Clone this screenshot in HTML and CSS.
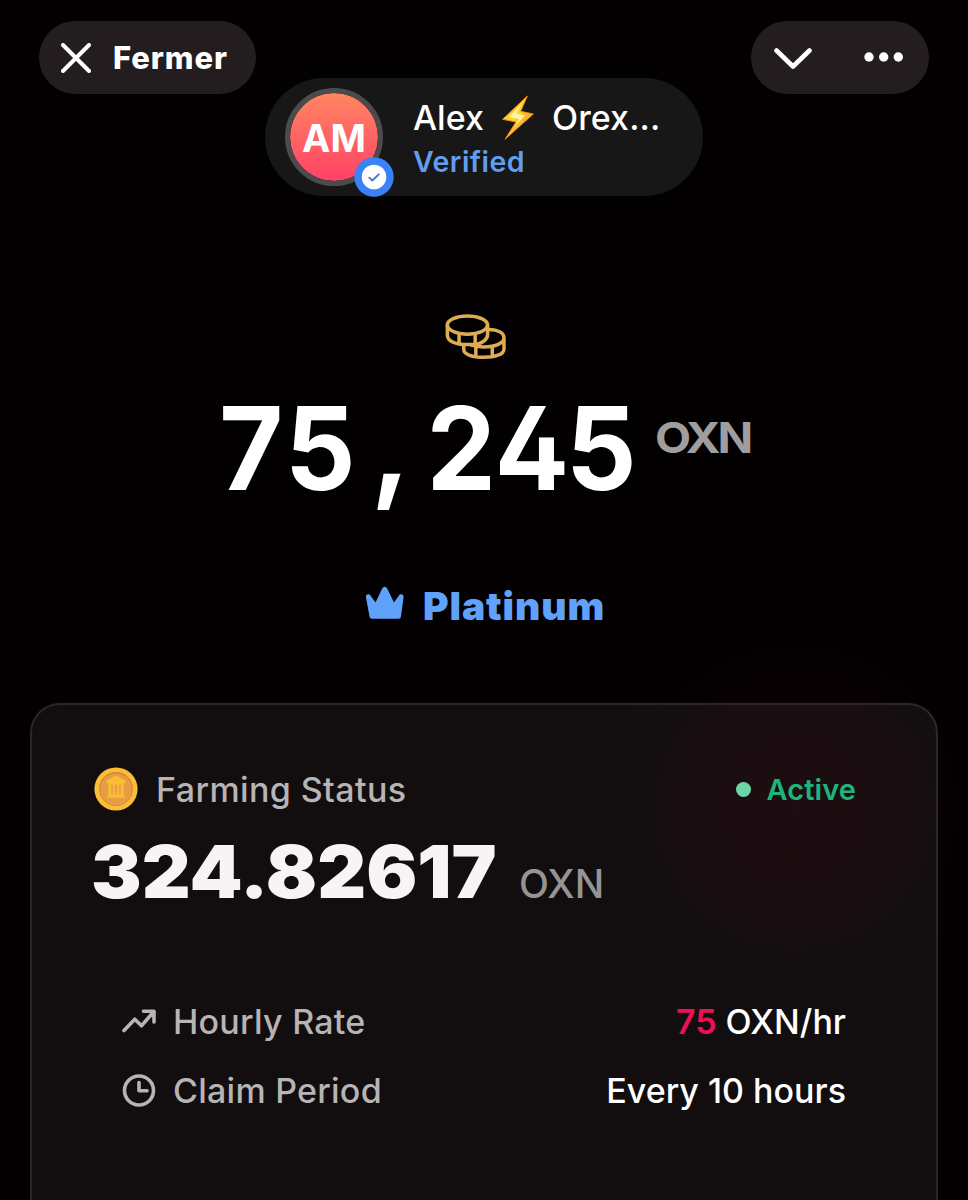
FILE: index.html
```html
<!DOCTYPE html>
<html lang="fr">
<head>
<meta charset="utf-8">
<title>OXN</title>
<link rel="stylesheet" href="styles.css">
</head>
<body>
<div class="app">
  <header class="topbar">
    <button class="pill close">
      <svg class="close-icon" viewBox="0 0 30 30"><path d="M2 2 28 28M28 2 2 28"/></svg>
      <span class="close-text">Fermer</span>
    </button>
    <div class="pill actions">
      <svg class="chevron" viewBox="0 0 38 22"><path d="M2.500 2.500 19 18.500 35.500 2.500"/></svg>
      <svg class="dots" viewBox="0 0 40 10"><circle cx="5" cy="5" r="4.700"/><circle cx="19.700" cy="5" r="4.700"/><circle cx="34.300" cy="5" r="4.700"/></svg>
    </div>
  </header>

  <section class="profile">
    <div class="avatar">
      <span class="initials">AM</span>
      <svg class="badge" viewBox="0 0 40 40"><circle cx="20" cy="20" r="19.700" fill="#3b82f6"/><circle cx="20" cy="20" r="12.300" fill="#fff"/><path d="M15.300 20.600 18.300 23.500 24.800 17.300" fill="none" stroke="#3b76e0" stroke-width="1.800" stroke-linecap="round" stroke-linejoin="round"/></svg>
    </div>
    <div class="who">
      <div class="name">
        <span class="first">Alex</span>
        <svg class="bolt" viewBox="0 0 36 46">
          <defs><linearGradient id="bolt" x1="0" y1="0" x2="1" y2="1"><stop offset="0" stop-color="#ffc21a"/><stop offset=".45" stop-color="#ffd23a"/><stop offset="1" stop-color="#f08200"/></linearGradient></defs>
          <path d="M27.300 1 2.700 24.300 16 27 5 44.300 33.300 19 20.700 16.300Z" fill="url(#bolt)" stroke="#f0900c" stroke-width="1" stroke-linejoin="round"/>
          <path d="M22 8.500 9 22 19 24 15 31 25 20.700 16.500 18.500Z" fill="#fff3a0"/>
        </svg>
        <span class="last">Orex...</span>
      </div>
      <div class="verified">Verified</div>
    </div>
  </section>

  <section class="balance">
    <svg class="coins" viewBox="42 38 188 140">
      <g fill="none" stroke="#deac53" stroke-width="10.500">
        <ellipse cx="112" cy="74" rx="60" ry="27"/>
        <path d="M52 74V103C52 120 70 129 98 132M172 74V103C172 116 158 129 132 133M87 100V131M135 100V131M92 132H136"/>
        <path d="M175 87C205 88 221 98 221 112C221 128 196 139 161 139C146 139 133 137 121 133M101 128V147C101 162 128 170 161 170C194 170 221 162 221 145V112M137 138V168M186 138V166"/>
      </g>
    </svg>
    <div class="amount">
      <span class="digits"><span>7</span><span>5</span><span class="comma">,</span><span>2</span><span>4</span><span>5</span></span>
      <span class="unit">OXN</span>
    </div>
    <div class="tier">
      <svg class="crown" viewBox="0 0 40 34"><path d="M4.500 30.500 1 11.500Q.500 8.500 3.200 8.300 4.800 8.200 5.600 9.700L10.500 16.500 17 3Q18 .700 19.700.700 21.400.700 22.400 3L29 16.500 33.800 9.700Q34.800 8.200 36.300 8.300 39 8.600 38.500 11.500L36 30.500Q35.700 32.700 33.600 32.700H6.800Q4.800 32.700 4.500 30.500Z"/></svg>
      <span class="tier-text">Platinum</span>
    </div>
  </section>

  <section class="card">
    <div class="status">
      <svg class="bank" viewBox="0 0 44 44"><circle cx="22" cy="22" r="21.600" fill="#fabd36"/><circle cx="22" cy="22" r="17" fill="#d98536"/><circle cx="22" cy="22.500" r="16" fill="#e89c43"/><path fill="#fabd36" d="M22 8.500 31 13.500V16H13V13.500ZM14 15H30V17.500H14ZM14.500 17H17.200V28H14.500ZM18.900 17H20.900V28H18.900ZM23.100 17H25.100V28H23.100ZM26.800 17H29.500V28H26.800ZM13.500 27.500H30.500V29L31.500 30.700H12.500L13.500 29Z"/></svg>
      <span class="label status-text">Farming Status</span>
      <span class="live"></span>
      <span class="active">Active</span>
    </div>
    <div class="earned"><span class="earned-value">324.82617</span><span class="earned-unit">OXN</span></div>
    <div class="row">
      <svg class="row-icon" viewBox="0 0 34 34"><path d="M2 26.500 12.800 15.200 19.500 21.800 31.500 8M21.500 7.300H32V18"/></svg>
      <span class="label rate">Hourly Rate</span>
      <span class="value rate-value"><b>75</b> OXN/hr</span>
    </div>
    <div class="row">
      <svg class="row-icon" viewBox="0 0 34 34"><circle cx="17" cy="17.500" r="14.500"/><path d="M17 9.500V17.700H25"/></svg>
      <span class="label period">Claim Period</span>
      <span class="value period-value">Every 10 hours</span>
    </div>
  </section>
</div>
</body>
</html>
```
FILE: styles.css
```css
* { box-sizing: border-box; }
body { margin: 0; background: #030001; font-family: Inter, "Liberation Sans", sans-serif; color: #fff; }
svg { display: block; flex: none; }
.app { width: 968px; height: 1200px; overflow: hidden; position: relative; }
.topbar { display: flex; justify-content: space-between; padding: 21px 39px 0; }
.pill { height: 73px; border-radius: 37px; background: #231d1f; display: flex; align-items: center; border: 0; color: #fff; white-space: nowrap; }
.close { width: 217px; padding: 0 0 0 22px; gap: 22px; font-family: inherit; }
.close-icon { width: 30px; height: 30px; fill: none; stroke: #fff; stroke-width: 4; stroke-linecap: round; }
.close-text { font-size: 31px; font-weight: 800; line-height: 40px; letter-spacing: .9px; }
.actions { width: 178px; padding: 3px 0 0 23px; }
.chevron { width: 38px; height: 22px; fill: none; stroke: #fff; stroke-width: 4.600; stroke-linecap: round; stroke-linejoin: round; }
.dots { width: 40px; height: 10px; margin: -4px 0 0 52px; fill: #fff; }

.profile { position: relative; width: 438px; height: 118px; margin: -16px 0 0 265px; border-radius: 59px; background: #171717; display: flex; padding: 10px 0 0 20px; }
.avatar { position: relative; width: 98px; height: 98px; border-radius: 50%; border: 5px solid #4b4b4b; background: linear-gradient(#ff8660, #ff4268) padding-box; display: flex; align-items: center; justify-content: center; flex: none; }
.initials { font-size: 38px; font-weight: 700; padding-top: 1px; }
.badge { position: absolute; width: 40px; height: 40px; right: -15.500px; bottom: -15.500px; }
.who { padding: 7px 0 0 30px; }
.name { display: flex; align-items: center; height: 44px; font-size: 34px; font-weight: 550; white-space: nowrap; }
.first { width: 87px; }
.bolt { width: 36px; height: 46px; margin-top: 2px; }
.last { margin-left: 16px; letter-spacing: .1px; }
.verified { font-size: 28.500px; line-height: 34px; margin-top: 6px; font-weight: 560; color: #619df0; letter-spacing: .45px; }

.balance { display: flex; flex-direction: column; }
.coins { width: 63px; height: 47px; margin: 117px 0 0 444px; }
.amount { display: flex; align-items: flex-start; height: 140px; margin: 19px 0 0 216px; }
.digits { display: flex; width: 421px; font-size: 115px; font-weight: 700; line-height: 140px; font-feature-settings: "tnum", "cv02"; }
.digits span { width: 70.200px; display: flex; justify-content: center; transform: scaleX(.96); }
.digits .comma { transform: translate(1px, -5px) skewX(-2deg) scaleY(1.04); }
.unit { margin-left: 18px; font-size: 43px; line-height: 52px; padding-top: 32px; font-weight: 700; color: #9f9d9e; letter-spacing: -2.600px; transform: scaleX(1.09); transform-origin: 0 50%; }
.tier { display: flex; align-items: center; height: 48px; margin: 62px 0 0 365px; color: #60a2fb; }
.crown { width: 40px; height: 34px; fill: #60a2fb; margin-top: -4px; }
.tier-text { margin-left: 18px; font-size: 39px; font-weight: 900; letter-spacing: .9px; }

.card { position: relative; width: 908px; height: 560px; margin: 74px 0 0 30px; border: 2px solid #2b2728; border-radius: 30px; background: #120e0f; padding: 60px 90px 0 62px; }
.card::before { content: ""; position: absolute; left: 563px; top: -96px; width: 400px; height: 400px; background: radial-gradient(circle, rgba(190, 0, 60, .065) 0, rgba(190, 0, 60, .054) 75px, rgba(190, 0, 60, .032) 134px, rgba(190, 0, 60, .010) 143px, transparent 200px); }
.status, .earned, .row { position: relative; display: flex; white-space: nowrap; }
.status { align-items: center; height: 48px; margin-right: -10px; }
.bank { width: 44px; height: 44px; }
.label { font-size: 34px; font-weight: 550; color: #b7b4b5; letter-spacing: .25px; }
.status-text { margin-left: 18px; letter-spacing: .4px; }
.live { width: 15px; height: 15px; border-radius: 50%; background: #6bd6a6; margin-left: auto; }
.active { margin-left: 15px; font-size: 29px; font-weight: 560; color: #1db47d; letter-spacing: .1px; }
.earned { align-items: baseline; height: 88px; line-height: 88px; margin-top: 15px; }
.earned-value { font-size: 72.500px; font-weight: 900; color: #f7f4f6; width: 404px; margin-left: -3px; letter-spacing: 0; transform: scaleX(1.045); transform-origin: 0 50%; }
.earned-unit { margin-left: 24px; font-size: 39px; font-weight: 480; color: #969394; }
.row { align-items: center; height: 42px; margin: 27px 0 0 28px; }
.earned + .row { margin-top: 84px; }
.row-icon { width: 34px; height: 34px; fill: none; stroke: #b7b4b5; stroke-width: 3.600; stroke-linecap: round; stroke-linejoin: round; }
.row .label { margin-left: 17px; }
.value { margin-left: auto; font-size: 34px; font-weight: 550; letter-spacing: 0; }
.value b { font-weight: 560; color: #f00e59; }
```
